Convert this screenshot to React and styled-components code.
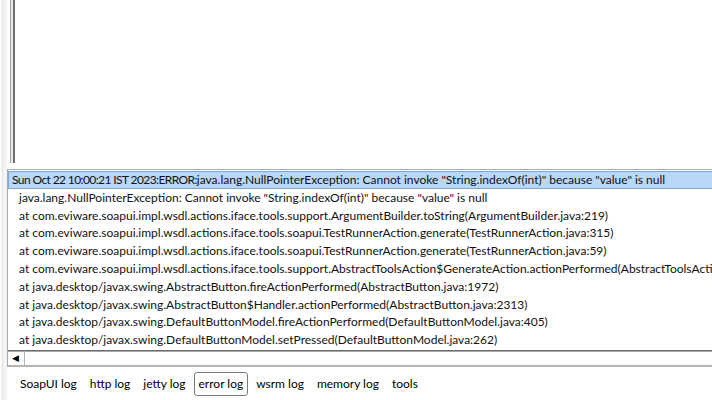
import React from "react";
import styled, { createGlobalStyle } from "styled-components";

const Global = createGlobalStyle`
  html, body { margin: 0; padding: 0; background: #ffffff; }
  body { font-family: Lato, "Liberation Sans", sans-serif; }
  * { box-sizing: border-box; }
`;

const Window = styled.div`
  width: 712px;
  height: 400px;
  display: flex;
  overflow: hidden;
  background: #ffffff;
`;

const Gutter = styled.div`
  width: 7px;
  flex: none;
  background: #f4f4f4;
  border-left: 2px solid #fbfbfb;
  box-shadow: inset 1px 0 0 #e2e2e2;
`;

const Main = styled.div`
  flex: 1;
  min-width: 0;
  display: flex;
  flex-direction: column;
`;

const TopPane = styled.div`
  height: 163px;
  flex: none;
  display: flex;
  padding-left: 3px;
  background: #ffffff;
`;

const Splitter = styled.div`
  width: 5px;
  border-left: 1px solid #a3a3a3;
  border-right: 2px solid #6e6e6e;
  background: #e9e9e9;
`;

const Gap = styled.div`
  height: 6px;
  flex: none;
  background: #ffffff;
`;

const LogPanel = styled.div`
  flex: none;
  display: flex;
  flex-direction: column;
  border-top: 1px solid #a9a9a9;
  border-left: 1px solid #a9a9a9;
  padding-top: 1px;
  width: 720px;
`;

const Rows = styled.div`
  display: flex;
  flex-direction: column;
`;

const Row = styled.div`
  height: 17.8px;
  line-height: 16px;
  font-size: 12px;
  color: #111111;
  white-space: nowrap;
  padding-left: ${(p) => (p.$indent ? 10 : 3)}px;
  border: 1px solid ${(p) => (p.$selected ? "#7aa7d6" : "transparent")};
  background: ${(p) => (p.$selected ? "#b9d7f6" : "transparent")};
`;

const Stamp = styled.span`
  letter-spacing: -0.6px;
`;

const HScroll = styled.div`
  margin-top: 1px;
  height: 17px;
  display: flex;
  border-top: 1px solid #6c6c6c;
  box-shadow: inset 0 1px 0 #a8a8a8;
  border-bottom: 2px solid #b4b4b4;
  background: #ffffff;
`;

const ArrowButton = styled.div`
  width: 17px;
  display: flex;
  align-items: center;
  justify-content: center;
  border-right: 1px solid #b4b4b4;
  font-size: 9px;
  color: #000000;
  padding-right: 2px;
`;

const Tabs = styled.div`
  flex: none;
  display: flex;
  align-items: center;
  gap: 3px;
  padding-top: 3px;
  padding-left: 8px;
  height: 32px;
`;

const Tab = styled.div`
  height: 24px;
  line-height: 22px;
  padding: 0 4px;
  font-size: 12px;
  color: #000000;
  border: 1px solid ${(p) => (p.$active ? "#7a7a7a" : "transparent")};
  border-radius: 3px;
  white-space: nowrap;
`;

const lines = [
  "java.lang.NullPointerException: Cannot invoke \"String.indexOf(int)\" because \"value\" is null",
  "at com.eviware.soapui.impl.wsdl.actions.iface.tools.support.ArgumentBuilder.toString(ArgumentBuilder.java:219)",
  "at com.eviware.soapui.impl.wsdl.actions.iface.tools.soapui.TestRunnerAction.generate(TestRunnerAction.java:315)",
  "at com.eviware.soapui.impl.wsdl.actions.iface.tools.soapui.TestRunnerAction.generate(TestRunnerAction.java:59)",
  "at com.eviware.soapui.impl.wsdl.actions.iface.tools.support.AbstractToolsAction$GenerateAction.actionPerformed(AbstractToolsAction.java:414)",
  "at java.desktop/javax.swing.AbstractButton.fireActionPerformed(AbstractButton.java:1972)",
  "at java.desktop/javax.swing.AbstractButton$Handler.actionPerformed(AbstractButton.java:2313)",
  "at java.desktop/javax.swing.DefaultButtonModel.fireActionPerformed(DefaultButtonModel.java:405)",
  "at java.desktop/javax.swing.DefaultButtonModel.setPressed(DefaultButtonModel.java:262)",
];

const tabs = ["SoapUI log", "http log", "jetty log", "error log", "wsrm log", "memory log", "tools"];

export default function App() {
  return (
    <>
      <Global />
      <Window>
        <Gutter />
        <Main>
          <TopPane>
            <Splitter />
          </TopPane>
          <Gap />
          <LogPanel>
            <Rows>
              <Row $selected>
                <Stamp>Sun Oct 22 10:00:21 IST 2023:ERROR:</Stamp>java.lang.NullPointerException: Cannot invoke "String.indexOf(int)" because "value" is null
              </Row>
              {lines.map((l, i) => (
                <Row key={i} $indent>
                  {l}
                </Row>
              ))}
            </Rows>
            <HScroll>
              <ArrowButton>◀</ArrowButton>
            </HScroll>
          </LogPanel>
          <Tabs>
            {tabs.map((t) => (
              <Tab key={t} $active={t === "error log"}>
                {t}
              </Tab>
            ))}
          </Tabs>
        </Main>
      </Window>
    </>
  );
}
